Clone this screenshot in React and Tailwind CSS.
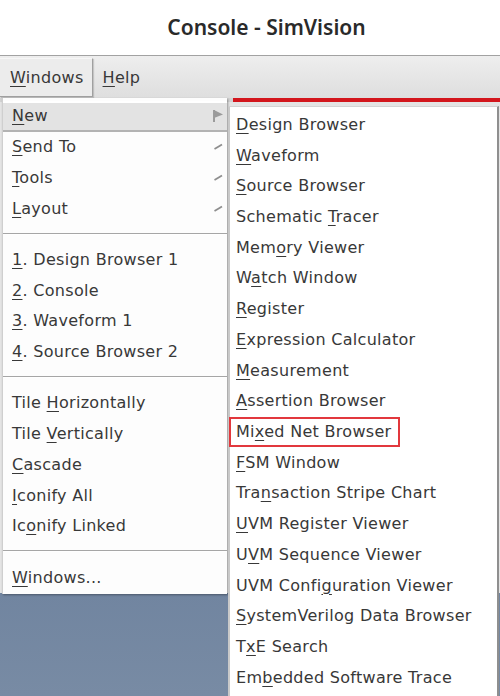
import React from 'react'

const mainItems = [
  { t: 'New', u: 0, arrow: 'flag', active: true },
  { t: 'Send To', u: 0, arrow: 'dash' },
  { t: 'Tools', u: 0, arrow: 'dash' },
  { t: 'Layout', u: 0, arrow: 'dash' },
  'sep',
  { t: '1. Design Browser 1', u: 0 },
  { t: '2. Console', u: 0 },
  { t: '3. Waveform 1', u: 0 },
  { t: '4. Source Browser 2', u: 0 },
  'sep',
  { t: 'Tile Horizontally', u: 5 },
  { t: 'Tile Vertically', u: 5 },
  { t: 'Cascade', u: 0 },
  { t: 'Iconify All', u: 0 },
  { t: 'Iconify Linked', u: 2 },
  'sep',
  { t: 'Windows...', u: 0 },
]

const subItems = [
  { t: 'Design Browser', u: 0 },
  { t: 'Waveform', u: 0 },
  { t: 'Source Browser', u: 0 },
  { t: 'Schematic Tracer', u: 10 },
  { t: 'Memory Viewer', u: 3 },
  { t: 'Watch Window', u: 1 },
  { t: 'Register', u: 0 },
  { t: 'Expression Calculator', u: 0 },
  { t: 'Measurement', u: 0 },
  { t: 'Assertion Browser', u: 0 },
  { t: 'Mixed Net Browser', u: 2, boxed: true },
  { t: 'FSM Window', u: 0 },
  { t: 'Transaction Stripe Chart', u: 3 },
  { t: 'UVM Register Viewer', u: 0 },
  { t: 'UVM Sequence Viewer', u: 1 },
  { t: 'UVM Configuration Viewer', u: 9 },
  { t: 'SystemVerilog Data Browser', u: 0 },
  { t: 'TxE Search', u: 1 },
  { t: 'Embedded Software Trace', u: 2 },
]

function Label({ t, u }) {
  return (
    <span className="whitespace-pre">
      {t.slice(0, u)}
      <span className="underline underline-offset-[3px] decoration-1">{t[u]}</span>
      {t.slice(u + 1)}
    </span>
  )
}

function Arrow({ kind }) {
  if (kind === 'flag') {
    return (
      <svg width="11" height="14" viewBox="0 0 11 14" className="mr-[2px]">
        <line x1="1" y1="1" x2="1" y2="13" stroke="#8a8a8a" strokeWidth="1.6" />
        <polygon points="1,1 10,5.5 1,9" fill="#9a9a9a" />
      </svg>
    )
  }
  return (
    <svg width="9" height="8" viewBox="0 0 9 8" className="mr-[3px]">
      <line x1="0.5" y1="6" x2="8" y2="1.5" stroke="#8e8e8e" strokeWidth="1.8" />
    </svg>
  )
}

function Separator() {
  return (
    <div className="h-[20.5px] pt-[8.5px]">
      <div className="border-t border-[#a6a6a6] border-b border-b-white" />
    </div>
  )
}

export default function App() {
  return (
    <div className="w-[500px] h-[696px] overflow-hidden bg-white text-[#383838] flex flex-col" style={{ fontFamily: '"DejaVu Sans", sans-serif' }}>
      <div className="h-[55px] shrink-0 flex items-center justify-center pl-[33px]">
        <span className="text-[21px] font-semibold text-[#2a2a2a]" style={{ fontFamily: '"Noto Sans", sans-serif' }}>
          Console - SimVision
        </span>
      </div>
      <div className="h-[43px] shrink-0 border-t border-[#a2a2a2] bg-gradient-to-b from-[#eeeeee] to-[#dedede] flex items-start pt-[2px] text-[16px] tracking-[0.3px]">
        <div className="h-[39px] flex items-center pl-[10px] pr-[8px] bg-[#ececec] border-r border-b border-[#a0a0a0] border-t border-t-[#f6f6f6] shadow-[1px_1px_1px_rgba(0,0,0,0.15)]">
          <Label t="Windows" u={0} />
        </div>
        <div className="h-[39px] flex items-center ml-[10px]">
          <Label t="Help" u={0} />
        </div>
      </div>

      <div className="relative flex-1 flex flex-col bg-[#e4e4e4]">
        <div className="h-[4px] shrink-0 flex">
          <div className="w-[233px] bg-[#d2d2d2]" />
          <div className="flex-1 bg-[#d3161d]" />
        </div>
        <div className="flex-1" />
        <div className="h-[103px] bg-gradient-to-b from-[#7185a0] to-[#788ba4]" />

        <div className="absolute left-[2px] top-0 w-[225px] bg-[#fdfdfd] border-l border-[#cfcfcf] pt-[3px] pb-[0.5px] shadow-[1px_1px_2px_rgba(0,0,0,0.35)] text-[16px] tracking-[0.3px]">
          {mainItems.map((it, i) =>
            it === 'sep' ? (
              <Separator key={i} />
            ) : (
              <div
                key={i}
                className={
                  'h-[30.75px] flex items-center justify-between pl-[9px] pr-[1px] ' +
                  (it.active ? 'bg-[#e3e3e3] border-b-2 border-[#b3b3b3] border-t-2 border-t-white' : '')
                }
              >
                <Label t={it.t} u={it.u} />
                {it.arrow && <Arrow kind={it.arrow} />}
              </div>
            )
          )}
        </div>

        <div className="absolute left-[228px] right-[1px] top-[8px] bottom-0 bg-white border-l-2 border-[#c9c9c9] border-r-2 border-r-[#8f8f8f] border-t border-t-[#d4d4d4] pt-[2.5px] pl-[6px] text-[16px] tracking-[0.3px]">
          {subItems.map((it, i) => (
            <div key={i} className="relative h-[30.72px] flex items-center">
              <Label t={it.t} u={it.u} />
              {it.boxed && (
                <span className="absolute left-[-7px] top-0 bottom-0 w-[171px] border-2 border-[#e2383d]" />
              )}
            </div>
          ))}
        </div>
      </div>
    </div>
  )
}
